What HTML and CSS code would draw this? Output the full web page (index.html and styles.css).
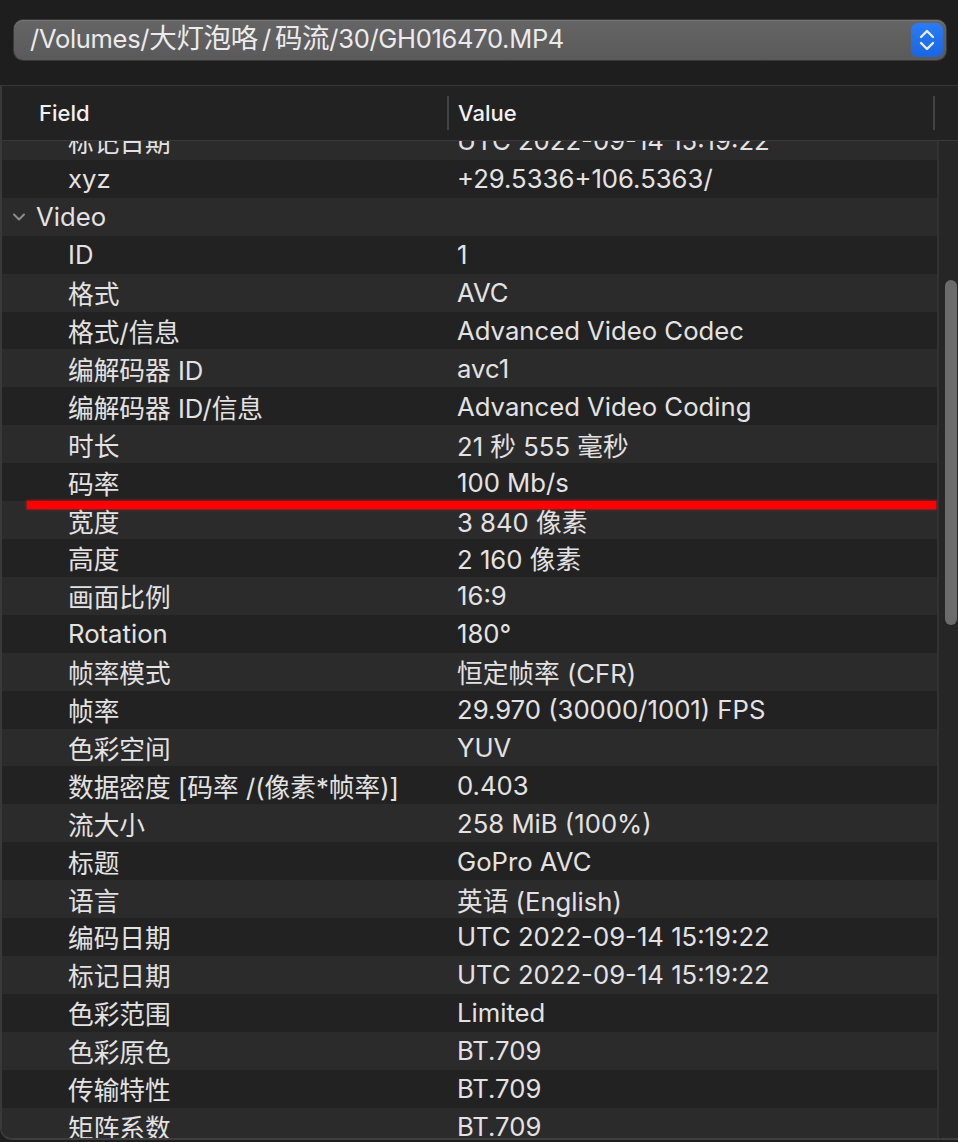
FILE: index.html
```html
<!DOCTYPE html>
<html lang="zh">
<head>
<meta charset="utf-8">
<title>MediaInfo</title>
<link rel="stylesheet" href="styles.css">
</head>
<body>
<div class="window">
  <div class="top">
    <div class="popup">
      <span class="popup-text">/Volumes/<span class="cjk">大灯泡咯</span><span class="sl">/</span><span class="cjk">码流</span>/30/GH016470.MP4</span>
      <span class="stepper">
        <svg width="20" height="26" viewBox="0 0 20 26"><path d="M4 10 L10 4 L16 10" fill="none" stroke="#e6eefc" stroke-width="2.4" stroke-linecap="round" stroke-linejoin="round"/><path d="M4 16 L10 22 L16 16" fill="none" stroke="#e6eefc" stroke-width="2.4" stroke-linecap="round" stroke-linejoin="round"/></svg>
      </span>
    </div>
  </div>
  <div class="table">
    <div class="header">
      <div class="hcell field-h">Field</div>
      <div class="hcell value-h">Value</div>
      <div class="hend"></div>
    </div>
    <div class="body">
      <div class="rows">
        <div class="list">
          <div class="row odd"><span class="f">标记日期</span><span class="v">UTC 2022-09-14 15:19:22</span></div>
          <div class="row"><span class="f">xyz</span><span class="v">+29.5336+106.5363/</span></div>
          <div class="row odd group"><span class="f"><svg class="chev" width="14" height="10" viewBox="0 0 14 10"><path d="M2 2.5 L7 7.5 L12 2.5" fill="none" stroke="#8e8d8e" stroke-width="2" stroke-linecap="round" stroke-linejoin="round"/></svg>Video</span><span class="v"></span></div>
          <div class="row"><span class="f">ID</span><span class="v">1</span></div>
          <div class="row odd"><span class="f">格式</span><span class="v">AVC</span></div>
          <div class="row"><span class="f">格式/信息</span><span class="v">Advanced Video Codec</span></div>
          <div class="row odd"><span class="f">编解码器 ID</span><span class="v">avc1</span></div>
          <div class="row"><span class="f">编解码器 ID/信息</span><span class="v">Advanced Video Coding</span></div>
          <div class="row odd"><span class="f">时长</span><span class="v">21 秒 555 毫秒</span></div>
          <div class="row"><span class="f">码率</span><span class="v">100 Mb/s</span></div>
          <div class="row odd"><span class="f">宽度</span><span class="v">3 840 像素</span></div>
          <div class="row"><span class="f">高度</span><span class="v">2 160 像素</span></div>
          <div class="row odd"><span class="f">画面比例</span><span class="v">16:9</span></div>
          <div class="row"><span class="f">Rotation</span><span class="v">180°</span></div>
          <div class="row odd"><span class="f">帧率模式</span><span class="v">恒定帧率 (CFR)</span></div>
          <div class="row"><span class="f">帧率</span><span class="v">29.970 (30000/1001) FPS</span></div>
          <div class="row odd"><span class="f">色彩空间</span><span class="v">YUV</span></div>
          <div class="row"><span class="f">数据密度 [码率 /(像素*帧率)]</span><span class="v">0.403</span></div>
          <div class="row odd"><span class="f">流大小</span><span class="v">258 MiB (100%)</span></div>
          <div class="row"><span class="f">标题</span><span class="v">GoPro AVC</span></div>
          <div class="row odd"><span class="f">语言</span><span class="v">英语 (English)</span></div>
          <div class="row"><span class="f">编码日期</span><span class="v">UTC 2022-09-14 15:19:22</span></div>
          <div class="row odd"><span class="f">标记日期</span><span class="v">UTC 2022-09-14 15:19:22</span></div>
          <div class="row"><span class="f">色彩范围</span><span class="v">Limited</span></div>
          <div class="row odd"><span class="f">色彩原色</span><span class="v">BT.709</span></div>
          <div class="row"><span class="f">传输特性</span><span class="v">BT.709</span></div>
          <div class="row odd"><span class="f">矩阵系数</span><span class="v">BT.709</span></div>
        </div>
      </div>
      <div class="track"><div class="thumb"></div></div>
    </div>
    <div class="redline"></div>
  </div>
</div>
</body>
</html>
```
FILE: styles.css
```css
html, body {
  margin: 0;
  padding: 0;
  background: #1f1e1f;
}
body {
  font-family: Inter, "Noto Sans", "Noto Sans CJK SC", sans-serif;
  color: #e3e2e3;
}
.window {
  width: 958px;
  height: 1142px;
  display: flex;
  flex-direction: column;
  overflow: hidden;
}
.top {
  height: 85px;
  flex: none;
  padding: 20px 12px 0 14px;
  box-sizing: border-box;
}
.popup {
  height: 40px;
  border-radius: 9px;
  background: linear-gradient(#666566, #5b5a5b);
  box-shadow: inset 0 1px 0 #767576, 0 0 0 1px #3a393a;
  display: flex;
  align-items: center;
  justify-content: space-between;
  padding: 0 3px 0 16px;
}
.popup-text {
  font-size: 25.5px;
  color: #ecebec;
  letter-spacing: -0.3px;
  line-height: 1;
  padding-bottom: 3px;
  white-space: nowrap;
}
.popup-text .cjk {
  font-size: 27.5px;
}
.popup-text .sl {
  margin: 0 4px;
}
.stepper {
  width: 32px;
  height: 34px;
  border-radius: 7px;
  background: linear-gradient(#2a7cf4, #1a65e0);
  display: flex;
  align-items: center;
  justify-content: center;
}
.table {
  flex: 1;
  position: relative;
  display: flex;
  flex-direction: column;
  border-top: 1px solid #373637;
  border-left: 2px solid #3a393a;
  border-bottom: 2px solid #3e3d3e;
  border-bottom-left-radius: 12px;
  margin-bottom: 2px;
  overflow: hidden;
  background: #262526;
}
.header {
  height: 54px;
  flex: none;
  display: flex;
  align-items: center;
  background: #232223;
  border-bottom: 1px solid #3a393a;
}
.hcell {
  font-size: 22px;
  font-weight: 500;
  color: #f2f1f2;
  height: 34px;
  display: flex;
  align-items: center;
}
.field-h {
  width: 445px;
  padding-left: 37px;
  box-sizing: border-box;
}
.value-h {
  width: 488px;
  padding-left: 9px;
  box-sizing: border-box;
  border-left: 2px solid #444344;
  border-right: 2px solid #444344;
}
.body {
  flex: 1;
  display: flex;
  min-height: 0;
}
.rows {
  width: 935px;
  overflow: hidden;
  border-right: 2px solid #333233;
}
.list {
  margin-top: -19px;
}
.row {
  height: 37.92px;
  display: flex;
  align-items: center;
  background: #232223;
  font-size: 25.7px;
  color: #e3e2e3;
}
.row.odd {
  background: #2c2b2c;
}
.f {
  width: 447px;
  padding-left: 66px;
  box-sizing: border-box;
  white-space: nowrap;
  display: flex;
  align-items: center;
}
.group .f {
  padding-left: 10px;
}
.chev {
  margin-right: 10px;
}
.v {
  padding-left: 8px;
  white-space: nowrap;
}
.track {
  flex: 1;
  position: relative;
  background: #272627;
  padding: 139px 1px 0 6px;
}
.thumb {
  height: 345px;
  border-radius: 6px;
  background: #6c6b6c;
}
.redline {
  position: absolute;
  left: 25px;
  top: 415px;
  width: 909px;
  height: 8px;
  background: #ff0000;
  box-shadow: 0 0 2px 1px rgba(255, 20, 20, 0.5);
}
```
